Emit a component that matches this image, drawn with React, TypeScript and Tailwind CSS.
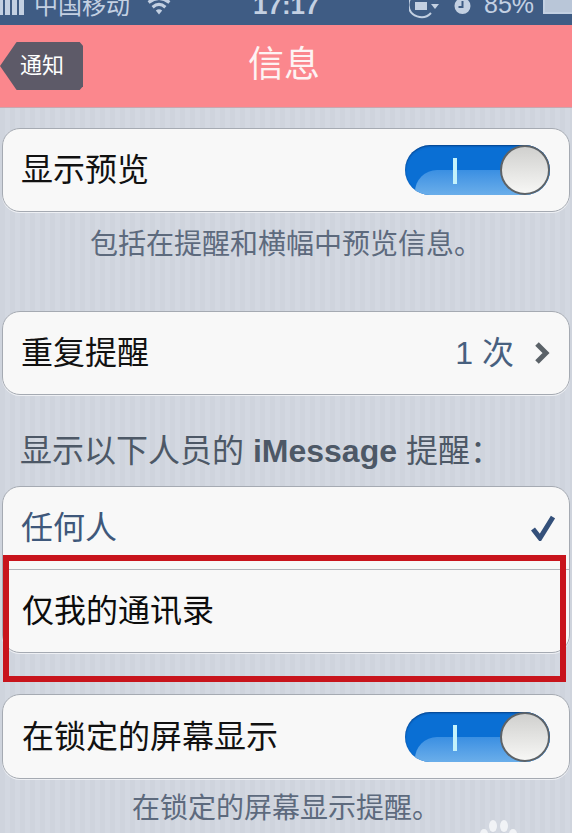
import React from 'react';

const CJK = { fontFamily: '"Liberation Sans", "Noto Sans CJK SC", sans-serif' };

const Toggle: React.FC = () => (
  <div className="relative h-[50px] w-[145px] shrink-0 overflow-hidden rounded-full bg-[#0a6fd4] shadow-[inset_0_1px_2px_rgba(0,30,80,0.6)]">
    <div className="absolute bottom-0 left-[10px] right-0 h-[25px] rounded-tl-[22px] bg-gradient-to-b from-[#3a8fe2] to-[#6aaeea]" />
    <div className="absolute left-[48px] top-[13px] h-[26px] w-[4px] bg-[#c4f2fb]" />
    <div className="absolute right-0 top-0 h-[50px] w-[50px] rounded-full border-2 border-[#5e6367] bg-gradient-to-b from-[#d0d0ce] to-[#f7f7f5]" />
  </div>
);

const Card: React.FC<{ children: React.ReactNode; className?: string }> = ({ children, className }) => (
  <div className={`mx-[2px] rounded-[18px] border border-[#a5aab2] bg-[#f8f8f8] shadow-[0_1px_0_#eef0f4] ${className ?? ''}`}>
    {children}
  </div>
);

const Paw: React.FC = () => (
  <svg width="44" height="20" viewBox="0 0 44 20" fill="#f1f3f6">
    <ellipse cx="8" cy="15" rx="4" ry="5" />
    <ellipse cx="17" cy="7" rx="4" ry="6" />
    <ellipse cx="28" cy="7" rx="4" ry="6" />
    <ellipse cx="37" cy="15" rx="4" ry="5" />
  </svg>
);

export default function App() {
  return (
    <div
      className="relative h-[833px] w-[572px] overflow-hidden bg-[#d0d5de] bg-[repeating-linear-gradient(90deg,#cfd4dd_0px,#cfd4dd_5px,#d3d8e1_5px,#d3d8e1_10px)]"
      style={CJK}
    >
      {/* status bar */}
      <div className="flex h-[25px] items-start overflow-hidden whitespace-nowrap bg-[#3f5c84] text-[#c3d0e2]">
        <div className="flex h-[15px] w-[24px] shrink-0 items-end gap-[2px]">
          <span className="h-[15px] w-[3px] bg-[#c3d0e2]" />
          <span className="h-[15px] w-[5px] bg-[#c3d0e2]" />
          <span className="h-[15px] w-[5px] bg-[#c3d0e2]" />
          <span className="h-[15px] w-[5px] bg-[#c3d0e2]" />
        </div>
        <span className="ml-[10px] -mt-[6px] shrink-0 text-[24px] leading-[24px]">中国移动</span>
        <svg width="28" height="16" viewBox="0 0 28 20" className="ml-[15px] shrink-0" fill="none" stroke="#c3d0e2" strokeWidth="4">
          <path d="M1 3 Q14 -7 27 3" />
          <path d="M6 9 Q14 2 22 9" />
          <path d="M14 18 L10 13 Q14 10 18 13 Z" fill="#c3d0e2" stroke="none" />
        </svg>
        <span className="ml-[80px] -mt-[9px] w-[63px] shrink-0 text-[26px] leading-[28px] font-bold">17:17</span>
        <svg width="31" height="20" viewBox="0 0 31 20" className="ml-[93px] shrink-0" fill="none" stroke="#c3d0e2" strokeWidth="2">
          <path d="M22 13 A13 13 0 0 1 -0.5 5 A13 13 0 0 1 12 -8" />
          <rect x="6" y="2" width="12" height="8" fill="#c3d0e2" stroke="none" />
          <path d="M22 4 h8 l-4 5 z" fill="#c3d0e2" stroke="none" />
        </svg>
        <svg width="19" height="16" viewBox="0 0 16 16" className="ml-[13px] shrink-0">
          <circle cx="8" cy="6" r="8" fill="#c3d0e2" />
          <path d="M8 1 V7 H4" fill="none" stroke="#3f5c84" strokeWidth="2" />
        </svg>
        <span className="ml-[12px] -mt-[9px] w-[51px] shrink-0 text-[25px] leading-[26px]">85%</span>
        <div className="ml-[8px] h-[14px] w-[40px] shrink-0 border-2 border-t-0 border-[#c3d0e2] bg-[#b9c6d8]" />
      </div>

      {/* nav bar */}
      <div className="relative flex h-[83px] items-center justify-center border-b border-[#c9a7b0] bg-[#fb878d]">
        <div className="absolute left-0 top-[17px] flex h-[48px] w-[83px] items-center justify-end bg-[#5d5a68] pr-[19px] [clip-path:polygon(0_50%,20%_0,96%_0,100%_8%,100%_92%,96%_100%,20%_100%)]">
          <span className="text-[22px] leading-none text-white">通知</span>
        </div>
        <span className="-mt-[2px] mr-[4px] text-[36px] leading-none text-[#fdf3f3]">信息</span>
      </div>

      {/* content */}
      <div className="flex flex-col pt-[20px]">
        <Card className="flex h-[84px] items-center justify-between pl-[18px] pr-[19px]">
          <span className="text-[32px] leading-none text-[#111]">显示预览</span>
          <Toggle />
        </Card>
        <p className="mt-[16px] h-[34px] text-center text-[28px] leading-[34px] text-[#5d6a7d]">包括在提醒和横幅中预览信息。</p>

        <Card className="mt-[49px] flex h-[84px] items-center justify-between pl-[18px] pr-[19px]">
          <span className="text-[32px] leading-none text-[#111]">重复提醒</span>
          <div className="flex items-center gap-[20px] text-[#47607f]">
            <span className="text-[32px] leading-none">1 次</span>
            <svg width="16" height="24" viewBox="0 0 16 24" fill="none" stroke="#5b6268" strokeWidth="5">
              <path d="M3 3 L12 12 L3 21" />
            </svg>
          </div>
        </Card>

        <p className="mt-[36px] h-[40px] whitespace-nowrap pl-[20px] text-[32px] leading-[40px] text-[#4d5866]">
          显示以下人员的 <span className="font-bold">iMessage</span> 提醒：
        </p>

        <Card className="mt-[15px] flex h-[167px] flex-col">
          <div className="flex h-[83px] items-center justify-between border-b border-[#b3b5bb] pl-[18px] pr-[14px]">
            <span className="text-[32px] leading-none text-[#3f587b]">任何人</span>
            <svg width="24" height="26" viewBox="0 0 24 26" fill="none" stroke="#34507a" strokeWidth="5">
              <path d="M2 14 L9 23 L22 2" />
            </svg>
          </div>
          <div className="flex flex-1 items-center pl-[19px]">
            <span className="text-[32px] leading-none text-[#0c0c0c]">仅我的通讯录</span>
          </div>
        </Card>

        <Card className="mt-[41px] flex h-[85px] items-center justify-between pl-[19px] pr-[19px]">
          <span className="text-[32px] leading-none text-[#111]">在锁定的屏幕显示</span>
          <Toggle />
        </Card>
        <p className="mt-[13px] h-[34px] text-center text-[28px] leading-[34px] text-[#5d6a7d]">在锁定的屏幕显示提醒。</p>
      </div>

      {/* red annotation box */}
      <div className="absolute left-[3px] top-[555px] h-[127px] w-[563px] border-[6px] border-[#c8141c]" />
      <div className="absolute left-[476px] top-[819px]">
        <Paw />
      </div>
    </div>
  );
}
